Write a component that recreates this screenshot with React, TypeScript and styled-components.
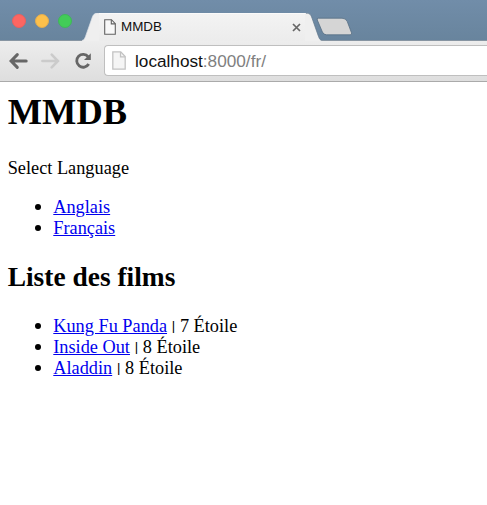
import React from 'react';
import styled, { createGlobalStyle } from 'styled-components';

const GlobalStyle = createGlobalStyle`
  * { box-sizing: border-box; }
  html, body { margin: 0; background: #fff; overflow: hidden; }
`;

const Window = styled.div`
  width: 487px;
  height: 505px;
  overflow: hidden;
  background: #fff;
`;

const TabStrip = styled.header`
  display: flex;
  height: 41px;
  background: linear-gradient(#718da9, #68849d);
  box-shadow: inset 0 -1px #8795a2;
`;

const Lights = styled.div`
  display: flex;
  gap: 9px;
  width: 82px;
  padding: 14px 0 0 12px;
`;

const Light = styled.span<{ $fill: string; $edge: string }>`
  width: 14px;
  height: 14px;
  border-radius: 50%;
  background: ${(p) => p.$fill};
  border: 1px solid ${(p) => p.$edge};
`;

const Tab = styled.div`
  display: flex;
  height: 28px;
  margin-top: 13px;
`;

const TabEdge = styled.svg`
  display: block;
  width: 17px;
  height: 28px;
`;

const TabBody = styled.div`
  display: flex;
  align-items: center;
  width: 206px;
  padding: 0 4px 0 5px;
  background: linear-gradient(#f3f3f3, #ececec);
  box-shadow: inset 0 1px #fafafa;
`;

const TabTitle = styled.span`
  flex: 1;
  margin-left: 5px;
  font: 13.4px/28px 'Liberation Sans', Arial, sans-serif;
  color: #111;
`;

const NewTab = styled.svg`
  display: block;
  width: 37px;
  height: 19px;
  margin: 17px 0 0 -6px;
`;

const Toolbar = styled.nav`
  display: flex;
  height: 41px;
  padding: 4px 0 0 9px;
  background: linear-gradient(#ededed, #dedede);
  border-bottom: 1px solid #aaa;
`;

const NavIcon = styled.svg<{ $gap: number }>`
  display: block;
  flex: none;
  width: 20px;
  height: 20px;
  margin: 6px ${(p) => p.$gap}px 0 0;
`;

const AddressBar = styled.div`
  display: flex;
  align-items: center;
  flex: 1;
  height: 31px;
  padding-left: 7px;
  background: #fff;
  border: 1px solid #bfbfbf;
  border-right: 0;
  border-radius: 4px 0 0 4px;
`;

const PageIcon = styled.svg`
  display: block;
  flex: none;
`;

const Address = styled.span`
  margin-left: 9px;
  font: 17.2px/28px 'Liberation Sans', Arial, sans-serif;
  color: #808080;
`;

const Host = styled.span`
  color: #111;
`;

const Page = styled.main`
  padding: 9px 7.7px;
  font: 18.3px/20.7px 'Liberation Serif', 'Times New Roman', serif;
  color: #000;
`;

const Title = styled.h1`
  margin: 0 0 24px;
  font-size: 36.4px;
  line-height: 43px;
`;

const Prompt = styled.p`
  margin: 0 0 18.4px;
`;

const Heading = styled.h2`
  margin: 22.6px 0 23px;
  font-size: 27.45px;
  line-height: 32px;
`;

const List = styled.ul`
  margin: 0;
  padding-left: 45.6px;
  list-style: none;
`;

const Item = styled.li`
  &::before {
    content: '';
    display: inline-block;
    width: 6px;
    height: 6px;
    margin: 0 12.4px 0 -18.4px;
    border-radius: 50%;
    background: #000;
    vertical-align: 3px;
  }
`;

const Link = styled.a`
  color: #0000ee;
  text-decoration: underline;
`;

const Separator = styled.span`
  display: inline-block;
  width: 3.7px;
  text-align: center;
  font-family: 'Liberation Sans', Arial, sans-serif;
  font-size: 13px;
  line-height: 0;
  vertical-align: 2px;
`;

const languages = ['Anglais', 'Français'];
const films = [
  { name: 'Kung Fu Panda', stars: 7 },
  { name: 'Inside Out', stars: 8 },
  { name: 'Aladdin', stars: 8 },
];

const Document = ({ w, h, stroke, fill }: { w: number; h: number; stroke: string; fill: string }) => (
  <PageIcon width={w} height={h} viewBox="0 0 12 16" preserveAspectRatio="none">
    <path d="M.7.7h6.8l3.8 4v10.6H.7Z" fill={fill} stroke={stroke} strokeWidth="1.1" />
    <path d="M7.3.8v4.1h4" fill="none" stroke={stroke} strokeWidth="1.1" />
  </PageIcon>
);

export default function App() {
  return (
    <Window>
      <GlobalStyle />
      <TabStrip>
        <Lights>
          <Light $fill="#fc6662" $edge="#e9605f" />
          <Light $fill="#fdc04b" $edge="#e2ad50" />
          <Light $fill="#42cc58" $edge="#3fb65a" />
        </Lights>
        <Tab>
          <TabEdge viewBox="0 0 17 28">
            <path d="M0 28V27.5C2 27 2.5 26 3.5 23.5L10 5C11.3 1.5 12 0 16 0H17V28Z" fill="#efefef" />
            <path d="M0 27.5C2 27 2.5 26 3.5 23.5L10 5C11.3 1.5 12 .3 17 .3" fill="none" stroke="#dce1e6" strokeWidth=".7" />
          </TabEdge>
          <TabBody>
            <Document w={12} h={16} stroke="#626262" fill="#f8f8f8" />
            <TabTitle>MMDB</TabTitle>
            <svg width="9" height="9" viewBox="0 0 9 9">
              <path d="M1 1l7 7M8 1L1 8" stroke="#676767" strokeWidth="1.7" />
            </svg>
          </TabBody>
          <TabEdge viewBox="0 0 17 28">
            <path d="M17 28V27.5C15 27 14.5 26 13.5 23.5L7 5C5.7 1.5 5 0 1 0H0V28Z" fill="#efefef" />
            <path d="M17 27.5C15 27 14.5 26 13.5 23.5L7 5C5.7 1.5 5 .3 1 .3" fill="none" stroke="#5f7488" strokeWidth=".7" />
          </TabEdge>
        </Tab>
        <NewTab viewBox="0 0 37 19">
          <path d="M2.5 1.2H26Q30 1.2 31.3 4.6L35.5 15.8Q36.3 17.8 34 17.8H10.5Q7.6 17.8 6.4 15L1.3 3Q.5 1.2 2.5 1.2Z" fill="#d5d5d5" stroke="#566d83" strokeWidth=".8" />
        </NewTab>
      </TabStrip>
      <Toolbar>
        <NavIcon $gap={12} viewBox="0 0 20 20">
          <path d="M8.3 3.6L2.1 10L8.3 16.4M2.6 10H17.2" fill="none" stroke="#666" strokeWidth="3" strokeLinecap="round" />
        </NavIcon>
        <NavIcon $gap={13} viewBox="0 0 20 20">
          <path d="M10.7 3.6L16.9 10L10.7 16.4M16.4 10H1.4" fill="none" stroke="#cbcbcb" strokeWidth="2.6" strokeLinecap="round" />
        </NavIcon>
        <NavIcon $gap={10} viewBox="0 0 20 20">
          <path d="M14.2 5.9A6.4 6.4 0 1 0 14.7 13" fill="none" stroke="#666" strokeWidth="2.8" />
          <path d="M16.8 2.2V9H10Z" fill="#666" />
        </NavIcon>
        <AddressBar>
          <Document w={14} h={19} stroke="#c2c2c2" fill="#f5f5f5" />
          <Address><Host>localhost</Host>:8000/fr/</Address>
        </AddressBar>
      </Toolbar>
      <Page>
        <Title>MMDB</Title>
        <Prompt>Select Language</Prompt>
        <List>
          {languages.map((name) => <Item key={name}><Link>{name}</Link></Item>)}
        </List>
        <Heading>Liste des films</Heading>
        <List>
          {films.map((film) => (
            <Item key={film.name}><Link>{film.name}</Link> <Separator>|</Separator> {film.stars} Étoile</Item>
          ))}
        </List>
      </Page>
    </Window>
  );
}
